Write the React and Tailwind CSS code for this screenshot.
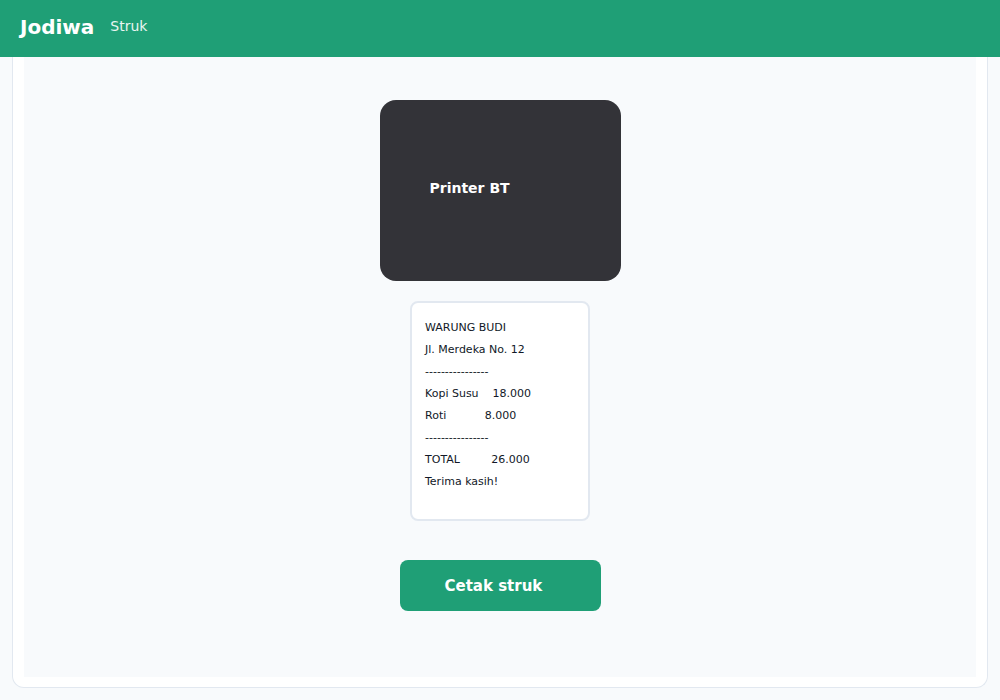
import React from 'react';

const RECEIPT_LINES = [
  'WARUNG BUDI',
  'Jl. Merdeka No. 12',
  '----------------',
  'Kopi Susu    18.000',
  'Roti           8.000',
  '----------------',
  'TOTAL         26.000',
  'Terima kasih!',
];

export default function App() {
  return (
    <div className="min-h-screen bg-[#f8fafc] font-['DejaVu_Sans',sans-serif]">
      {/* Top bar */}
      <header className="h-[57px] bg-[#1f9f76] flex items-center px-5 gap-4 pb-[4px]">
        <span className="text-white text-[20px] font-bold">Jodiwa</span>
        <span className="text-white/90 text-[14px]">Struk</span>
      </header>

      {/* Page card */}
      <div className="mx-3 mb-[11px] bg-white border border-t-0 border-[#e2e8f0] rounded-b-xl px-[11px] pb-[10px]">
        <div className="h-[620px] bg-[#f8fafc] flex flex-col items-center pt-[43px]">
          {/* Printer preview */}
          <div className="w-[241px] h-[181px] bg-[#333338] rounded-2xl flex items-center pl-[50px] pb-[4px]">
            <span className="text-white text-[14px] font-bold">Printer BT</span>
          </div>

          {/* Receipt */}
          <div className="mt-5 w-[180px] bg-white border-2 border-[#e2e8f0] rounded-lg pt-[14px] pb-[26px] px-[13px]">
            {RECEIPT_LINES.map((line, i) => (
              <div key={i} className="h-[22px] leading-[22px] text-[11px] text-[#111827] whitespace-pre">
                {line}
              </div>
            ))}
          </div>

          {/* Print button */}
          <button className="mt-[39px] w-[201px] h-[51px] bg-[#1f9f76] rounded-lg text-left pl-[45px] pt-[2px] text-white text-[15px] font-bold">
            Cetak struk
          </button>
        </div>
      </div>
    </div>
  );
}
